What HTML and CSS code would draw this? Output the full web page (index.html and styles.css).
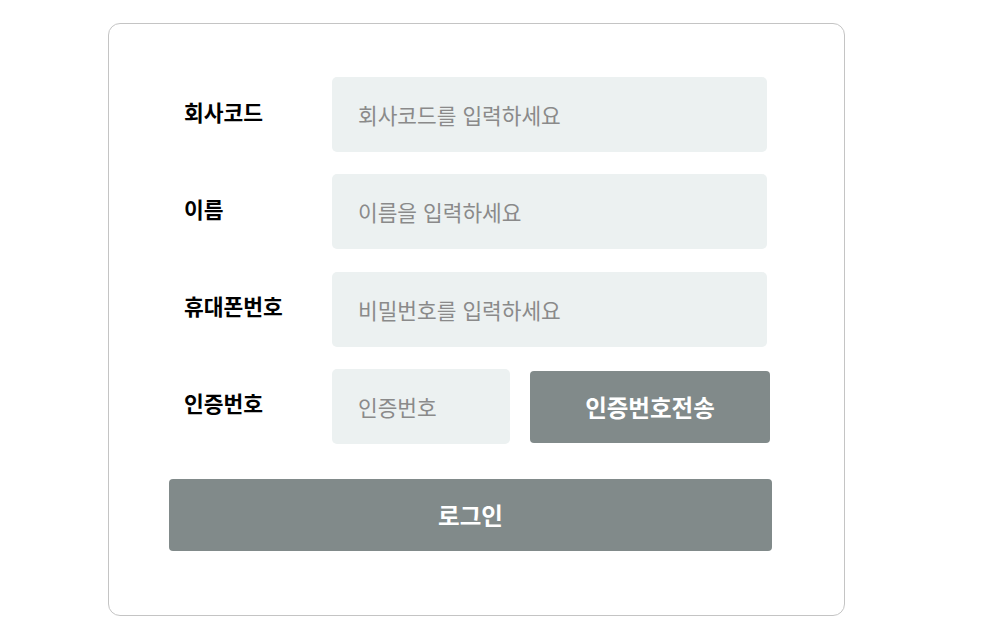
FILE: index.html
```html
<!DOCTYPE html>
<html lang="ko">
<head>
  <meta charset="UTF-8">
  <meta name="viewport" content="width=device-width, initial-scale=1.0">
  <title>로그인</title>
  <link rel="stylesheet" href="styles.css">
</head>
<body>
  <div class="login-box">
    <form class="login-form">
      <div class="row">
        <label class="label" for="company">회사코드</label>
        <input class="input" id="company" type="text" placeholder="회사코드를 입력하세요">
      </div>
      <div class="row">
        <label class="label" for="name">이름</label>
        <input class="input" id="name" type="text" placeholder="이름을 입력하세요">
      </div>
      <div class="row">
        <label class="label" for="phone">휴대폰번호</label>
        <input class="input" id="phone" type="text" placeholder="비밀번호를 입력하세요">
      </div>
      <div class="row">
        <label class="label" for="code">인증번호</label>
        <input class="input input-short" id="code" type="text" placeholder="인증번호">
        <button class="btn btn-send" type="button">인증번호전송</button>
      </div>
      <button class="btn btn-login" type="submit">로그인</button>
    </form>
  </div>
</body>
</html>
```

FILE: styles.css
```css
body {
  margin: 0;
  background-color: #fff;
  font-family: "Noto Sans CJK KR", "Noto Sans", sans-serif;
}
.login-box {
  width: 737px;
  margin: 23px 0 0 108px;
  padding: 53px 0 64px 60px;
  box-sizing: border-box;
  border: 1px solid #c4c4c4;
  border-radius: 12px;
}
.login-form {
  display: flex;
  flex-direction: column;
  gap: 22.3px;
  width: 603px;
}
.row {
  display: flex;
  align-items: center;
  height: 75px;
}
.label {
  width: 163px;
  padding-left: 15px;
  box-sizing: border-box;
  font-size: 21.5px;
  font-weight: bold;
  color: #000;
  margin-top: -7px;
}
.input {
  width: 435px;
  height: 75px;
  box-sizing: border-box;
  padding: 0 26px;
  border: none;
  border-radius: 5px;
  background-color: #ecf1f1;
  font-family: inherit;
  font-size: 21.4px;
  color: #333;
  outline: none;
}
.input::placeholder {
  color: #8a8a8a;
}
.input-short {
  width: 178px;
}
.btn {
  border: none;
  border-radius: 4px;
  background-color: #818a8a;
  color: #fff;
  font-family: inherit;
  font-size: 23.5px;
  font-weight: bold;
  cursor: pointer;
}
.btn-send {
  width: 240px;
  height: 72px;
  margin: 2px 0 0 20px;
  align-self: flex-start;
}
.btn-login {
  width: 603px;
  height: 72px;
  margin-top: 13px;
}
```
